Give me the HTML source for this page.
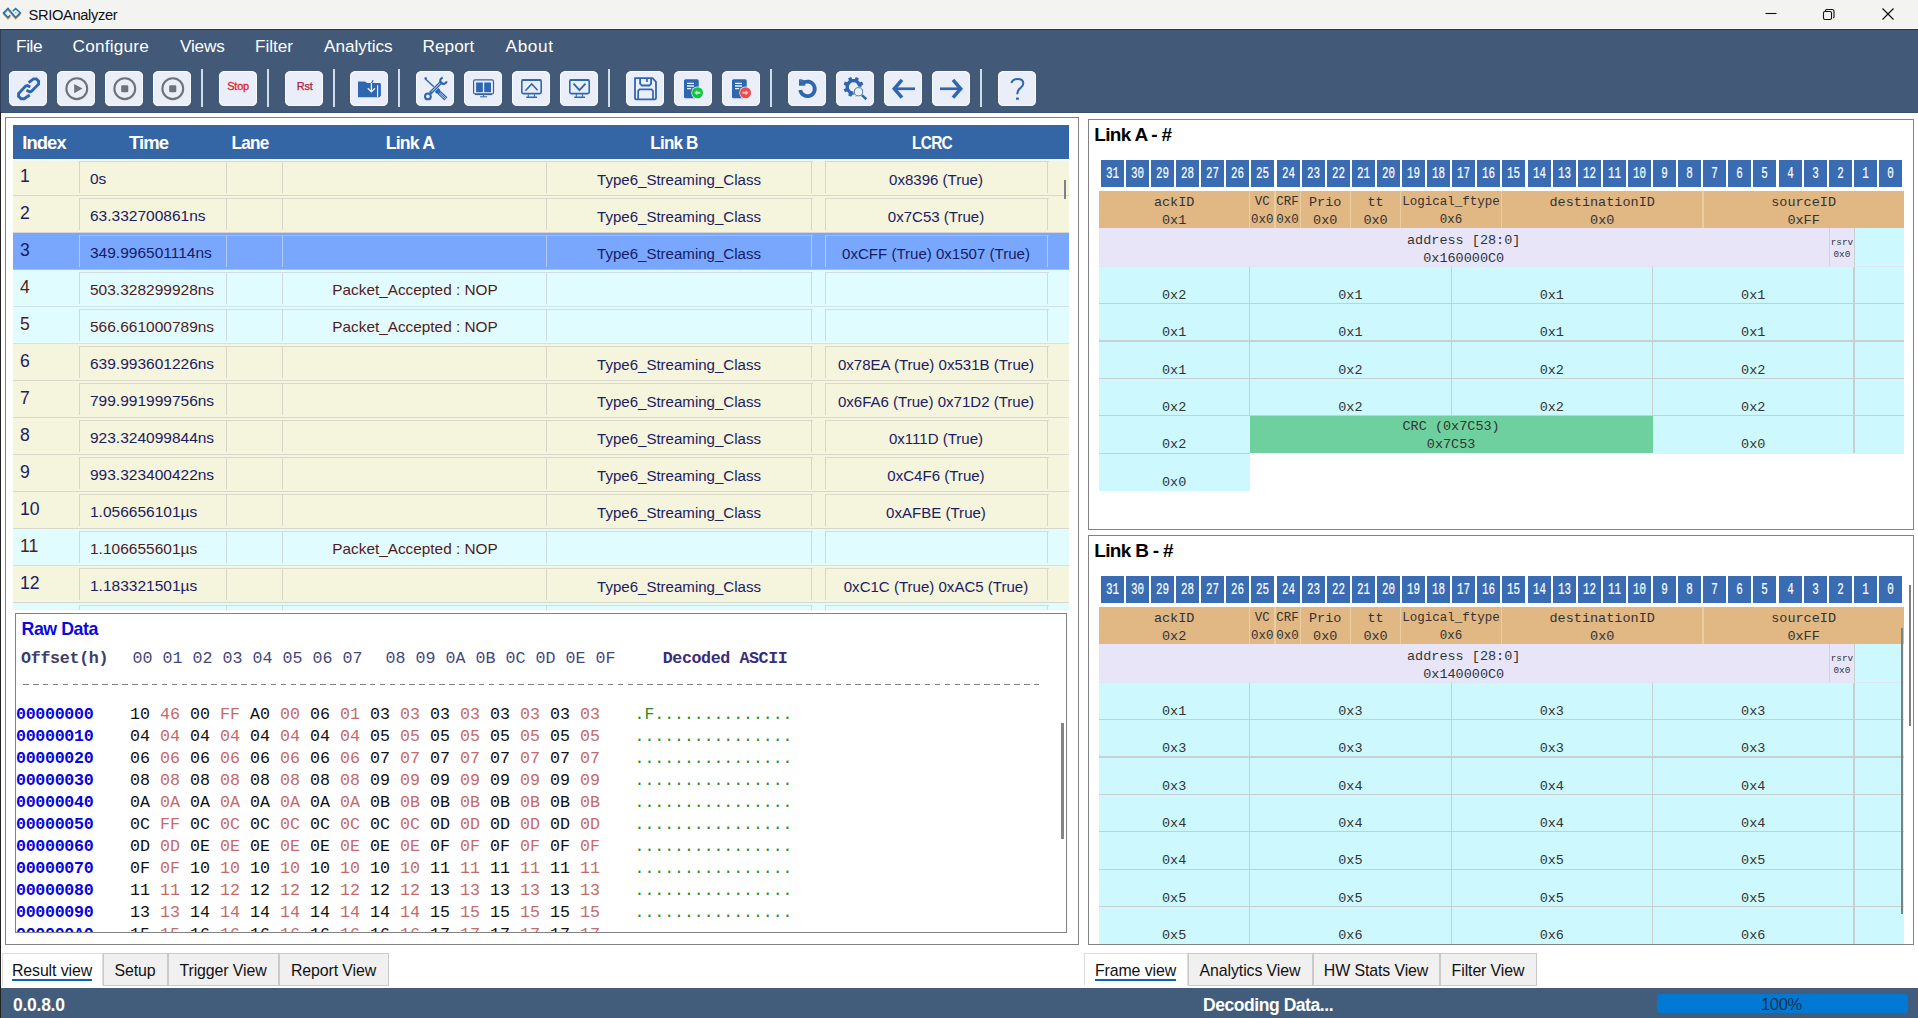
<!DOCTYPE html>
<html><head><meta charset="utf-8"><title>SRIOAnalyzer</title><style>
*{box-sizing:border-box;margin:0;padding:0}
html,body{width:1918px;height:1018px;overflow:hidden;background:#fff;font-family:"Liberation Sans",sans-serif;}
.abs{position:absolute}
#title{position:absolute;left:0;top:0;width:1918px;height:29px;background:#f3f3f1}
#tl1{position:absolute;left:0;top:28px;width:1918px;height:1px;background:#fbfbfb;z-index:5}
#tl2{position:absolute;left:0;top:29px;width:1918px;height:1px;background:#2d3046;z-index:5}
#title .t{position:absolute;left:28.6px;top:6.8px;font-size:14.7px;color:#111;letter-spacing:-0.36px;white-space:nowrap}
#band{position:absolute;left:0;top:29px;width:1918px;height:83.6px;background:#425978;box-shadow:inset 0 -1px 0 #3b506e}
#band .edge{position:absolute;left:0;top:0;width:1px;height:83px;background:#2f3f58}
.menu{position:absolute;top:7.2px;font-size:17.2px;color:#fff;white-space:nowrap;letter-spacing:-0.2px}
.tb{position:absolute;top:41.7px;width:38.2px;height:35.5px;border-radius:5.5px;background:#e9eef9;box-shadow:inset 0 0 0 1px #f7fafe}
.tb svg{position:absolute;left:0;top:0;width:38.2px;height:35.5px}
.sep{position:absolute;top:40px;width:2.1px;height:38px;background:#cfdcec}
.tbt{position:absolute;left:0;width:38.2px;text-align:center;top:9.6px;font-size:11px;letter-spacing:-0.2px}
</style></head><body>
<div id="tl1"></div><div id="tl2"></div>
<div id="title">
<svg class="abs" style="left:0;top:0" width="26" height="28" viewBox="0 0 26 28"><g transform="translate(11.95 13.45) scale(0.88 0.84) translate(-12 -13.35)"><path d="M10.2 16.9 L7.5 19.6 L2.6 14.2 L7.5 9 L16.2 19.6 L21.5 14.2" fill="none" stroke="#e9952c" stroke-width="1.6" stroke-linejoin="miter"/><path d="M10.1 15.5 L7.5 18.1 L2.4 12.7 L7.5 7.5 L16.2 18.1 L21.6 12.7 L16.2 7.5 L12.9 10.7" fill="none" stroke="#2278b4" stroke-width="1.9" stroke-linejoin="miter"/><path d="M7.5 10.3 L5.2 12.7 L7.5 15.1 M16.2 10.4 L18.7 12.7 L16.2 15" fill="none" stroke="#c9ecfa" stroke-width="0.9"/><circle cx="16.3" cy="12.6" r="0.9" fill="#e0a040"/></g></svg>
<div class="t">SRIOAnalyzer</div>
<svg class="abs" style="left:1760px;top:0" width="158" height="29" viewBox="0 0 158 29"><path d="M5.5 13.5 H16.5" stroke="#111" stroke-width="1.1" fill="none"/><rect x="63.5" y="11.5" width="8" height="8" rx="1.5" stroke="#111" stroke-width="1.1" fill="none"/><path d="M65.5 11 V10.5 Q65.5 9.5 66.5 9.5 H72 Q74 9.5 74 11.5 V17 Q74 17.8 73 17.8" stroke="#111" stroke-width="1.1" fill="none"/><path d="M122.5 8.5 L133.5 19.5 M133.5 8.5 L122.5 19.5" stroke="#111" stroke-width="1.2" fill="none"/></svg>
</div>
<div id="band"><div class="edge"></div>
<div class="menu" style="left:16px;letter-spacing:-0.37px">File</div>
<div class="menu" style="left:72.6px;letter-spacing:0.2px">Configure</div>
<div class="menu" style="left:180px;letter-spacing:-0.2px">Views</div>
<div class="menu" style="left:255px;letter-spacing:-0.03px">Filter</div>
<div class="menu" style="left:324px;letter-spacing:-0.01px">Analytics</div>
<div class="menu" style="left:422.6px;letter-spacing:0.02px">Report</div>
<div class="menu" style="left:505.6px;letter-spacing:0.6px">About</div>
<div class="tb" style="left:8.9px"><svg viewBox="0 0 38.2 35.5"><g fill="none" stroke="#2f66b0" stroke-width="2.9" stroke-linejoin="miter" stroke-miterlimit="2"><path d="M19.6 11.6 L24.5 7.9 H27.3 L29.6 10.2 V13.2 L22.5 20.3 L20.9 20.9 L17.4 19.3"/><path d="M20.7 24.0 L15.2 27.8 H12.2 L9.6 25.4 V22.5 L16.7 15.1 L18.4 14.5 L21.3 16.1"/></g></svg></div>
<div class="tb" style="left:56.8px"><svg viewBox="0 0 38.2 35.5"><circle cx="19.8" cy="17.7" r="10.4" fill="none" stroke="#6f7377" stroke-width="2.1"/><path d="M17.2 12.9 L25.5 17.6 L17.2 22.3 Z" fill="#6f7377"/></svg></div>
<div class="tb" style="left:104.8px"><svg viewBox="0 0 38.2 35.5"><circle cx="19.8" cy="17.7" r="10.4" fill="none" stroke="#6f7377" stroke-width="2.1"/><rect x="16.2" y="14.3" width="7.1" height="6.9" rx="1.3" fill="#6f7377"/></svg></div>
<div class="tb" style="left:152.8px"><svg viewBox="0 0 38.2 35.5"><circle cx="19.8" cy="17.7" r="10.4" fill="none" stroke="#6f7377" stroke-width="2.1"/><rect x="16.2" y="14.3" width="7.1" height="6.9" rx="1.3" fill="#6f7377"/></svg></div>
<div class="sep" style="left:201px"></div>
<div class="tb" style="left:219px"><div class="tbt" style="color:#e32222;-webkit-text-stroke:0.3px #e32222">Stop</div></div>
<div class="sep" style="left:267px"></div>
<div class="tb" style="left:285px"><div class="tbt" style="color:#b3203c;-webkit-text-stroke:0.25px #b3203c;text-indent:1px">Rst</div></div>
<div class="sep" style="left:333px"></div>
<div class="tb" style="left:350px"><svg viewBox="0 0 38.2 35.5"><path d="M8 10.5 H14.8 L17.2 12 H29.6 Q30.9 12 30.9 13.4 V24.8 L29.5 26.2 H8 Z" fill="#2f66b0"/><path d="M21.4 11 V20.4 M17.8 17.3 L21.4 20.8 L25 17.3" stroke="#e6f1fc" stroke-width="1.3" fill="none"/><path d="M23.1 9.2 L21.7 12" stroke="#2f66b0" stroke-width="1.3"/><path d="M27.6 14.2 V25.9" stroke="#e6f1fc" stroke-width="1.2"/></svg></div>
<div class="sep" style="left:398px"></div>
<div class="tb" style="left:416px"><svg viewBox="0 0 38.2 35.5"><g fill="none" stroke="#2f66b0"><path d="M9.8 8.2 L17.8 15.8" stroke-width="1.4"/><path d="M8.4 7.9 L10.9 6.9 M9.2 6.2 L10.2 8.9" stroke-width="1.3"/><path d="M20.6 18.9 L22.6 20.8" stroke-width="5.2"/><path d="M21.6 20 L29.9 27.9" stroke-width="4.4"/><path d="M23.9 21.3 L29.9 27 M22.9 22.3 L28.9 28" stroke="#e9eef9" stroke-width="0.7"/><path d="M14.2 22.2 L25.8 10.6" stroke-width="3.4"/><path d="M15.6 20.8 L24.6 11.8" stroke="#e9eef9" stroke-width="0.9"/><path d="M26.7 6.5 C23.4 8 23.6 11.2 25.6 12.2 C27.4 13.7 30 12.6 30.8 10.3" stroke-width="2.1"/><circle cx="11.9" cy="25.4" r="3.9" fill="#2f66b0" stroke="none"/><circle cx="11.9" cy="25.4" r="1.8" fill="#e9eef9" stroke="none"/></g></svg></div>
<div class="tb" style="left:464px"><svg viewBox="0 0 38.2 35.5"><rect x="9.6" y="8.8" width="19.9" height="14.2" rx="1.5" fill="none" stroke="#35609f" stroke-width="1.2"/><rect x="11.1" y="22.5" width="16.9" height="1.6" fill="#35609f"/><rect x="12.1" y="11.5" width="6.8" height="9.7" fill="#2f66b0"/><rect x="20.2" y="11.5" width="6.8" height="9.7" fill="#2f66b0"/><path d="M19.6 24 V25.8 M16 25.8 H23.1" stroke="#35609f" stroke-width="1"/></svg></div>
<div class="tb" style="left:512px"><svg viewBox="0 0 38.2 35.5"><rect x="9.8" y="9.1" width="19.4" height="13.5" rx="1.5" fill="none" stroke="#2f66b0" stroke-width="1.6"/><path d="M9.8 9 H29.2" stroke="#2f66b0" stroke-width="1.8"/><path d="M13.4 19.8 L19.75 12.9 L25.6 19.3" fill="none" stroke="#2f66b0" stroke-width="1.6"/><path d="M16.3 23.2 V25.8 M22.5 23.2 V25.8" stroke="#2f66b0" stroke-width="1.1"/><path d="M14.25 26.25 H25" stroke="#2f66b0" stroke-width="1.5"/></svg></div>
<div class="tb" style="left:560px"><svg viewBox="0 0 38.2 35.5"><rect x="9.8" y="9.1" width="19.4" height="13.5" rx="1.5" fill="none" stroke="#2f66b0" stroke-width="1.6"/><path d="M9.8 9 H29.2" stroke="#2f66b0" stroke-width="1.8"/><path d="M13.5 12.7 L19.5 19.2 L25.5 12.7" fill="none" stroke="#2f66b0" stroke-width="1.9"/><path d="M16.3 23.2 V25.8 M22.5 23.2 V25.8" stroke="#2f66b0" stroke-width="1.1"/><path d="M14.25 26.25 H25" stroke="#2f66b0" stroke-width="1.5"/></svg></div>
<div class="sep" style="left:608px"></div>
<div class="tb" style="left:626px"><svg viewBox="0 0 38.2 35.5"><path d="M9 7.2 H26.5 L30 10.8 V27 Q30 28.4 28.6 28.4 H10.4 Q9 28.4 9 27 Z" fill="none" stroke="#2f66b0" stroke-width="1.8" stroke-linejoin="round"/><path d="M14.1 7.2 V12.6 L15.9 14.5 H23.4 L25.1 12.6 V7.2" fill="none" stroke="#2f66b0" stroke-width="1.8"/><path d="M21 8 V11" stroke="#2f66b0" stroke-width="1.7"/><path d="M12.2 28.4 V19.8 L13.6 18.3 H25.6 L27 19.8 V28.4" fill="none" stroke="#2f66b0" stroke-width="1.7"/></svg></div>
<div class="tb" style="left:674px"><svg viewBox="0 0 38.2 35.5"><rect x="10" y="8.25" width="14.75" height="19" rx="1.6" fill="#2f66b0"/><path d="M13 12.3 H20 M13 15 H20 M13 17.7 H17.2" stroke="#e6f4fd" stroke-width="1.3"/><circle cx="23.5" cy="21.75" r="6.2" fill="#e9eef9"/><circle cx="23.5" cy="21.75" r="5.5" fill="#12c33e"/><path d="M20.4 21.75 L23.3 19.2 V20.7 H26.5 V22.8 H23.3 V24.3 Z" fill="#b5efc6"/></svg></div>
<div class="tb" style="left:722px"><svg viewBox="0 0 38.2 35.5"><rect x="10" y="8.25" width="14.75" height="19" rx="1.6" fill="#2f66b0"/><path d="M13 12.3 H20 M13 15 H20 M13 17.7 H17.2" stroke="#e6f4fd" stroke-width="1.3"/><circle cx="23.5" cy="21.75" r="6.2" fill="#e9eef9"/><circle cx="23.5" cy="21.75" r="5.5" fill="#ef4a4a"/><path d="M26.6 21.75 L23.7 19.2 V20.7 H20.5 V22.8 H23.7 V24.3 Z" fill="#fac4c4"/></svg></div>
<div class="sep" style="left:770px"></div>
<div class="tb" style="left:788px"><svg viewBox="0 0 38.2 35.5"><path d="M14.6 12.4 A7.3 7.3 0 1 1 12.25 19.0" fill="none" stroke="#2f66b0" stroke-width="3.8"/><path d="M11 8.25 L17.4 14.75 H11 Z" fill="#2f66b0"/><path d="M11 8.25 H13.5 L17 10 L17.4 14.75" fill="#2f66b0"/></svg></div>
<div class="tb" style="left:836px"><svg viewBox="0 0 38.2 35.5"><path d="M25.40 17.15 L27.32 18.26 L26.11 21.18 L23.97 20.60 L22.20 22.37 L22.78 24.51 L19.86 25.72 L18.75 23.80 L16.25 23.80 L15.14 25.72 L12.22 24.51 L12.80 22.37 L11.03 20.60 L8.89 21.18 L7.68 18.26 L9.60 17.15 L9.60 14.65 L7.68 13.54 L8.89 10.62 L11.03 11.20 L12.80 9.43 L12.22 7.29 L15.14 6.08 L16.25 8.00 L18.75 8.00 L19.86 6.08 L22.78 7.29 L22.20 9.43 L23.97 11.20 L26.11 10.62 L27.32 13.54 L25.40 14.65 Z" fill="#2f66b0"/><circle cx="17.5" cy="15.9" r="4.6" fill="#e9eef9"/><circle cx="22.5" cy="20.75" r="5.2" fill="#e9eef9"/><path d="M24.5 22.8 L31 28.8" stroke="#e9eef9" stroke-width="4"/><circle cx="22.5" cy="20.75" r="4.1" fill="#eef3fb" stroke="#41679d" stroke-width="0.9"/><path d="M25.9 24.2 L30.4 28.3" stroke="#2f66b0" stroke-width="2.5"/></svg></div>
<div class="tb" style="left:884px"><svg viewBox="0 0 38.2 35.5"><path d="M11 17.75 H31" fill="none" stroke="#2f66b0" stroke-width="2.7"/><path d="M18 8.9 L10.3 17.75 L18 26.6" fill="none" stroke="#2f66b0" stroke-width="3.5" stroke-miterlimit="6"/></svg></div>
<div class="tb" style="left:932px"><svg viewBox="0 0 38.2 35.5"><path d="M28 17.75 H8" fill="none" stroke="#2f66b0" stroke-width="2.7"/><path d="M21 8.9 L28.7 17.75 L21 26.6" fill="none" stroke="#2f66b0" stroke-width="3.5" stroke-miterlimit="6"/></svg></div>
<div class="sep" style="left:980px"></div>
<div class="tb" style="left:998px"><svg viewBox="0 0 38.2 35.5"><path d="M13.4 12 Q14.6 7.9 19.5 7.9 Q25.3 7.9 25.3 12.3 Q25.3 14.9 22.6 16.9 Q19.2 19.3 19.2 23.3" fill="none" stroke="#2f66b0" stroke-width="2"/><rect x="18" y="26.4" width="2.9" height="2.4" rx="0.5" fill="#2f66b0"/></svg></div>
</div>
<style>
#winedge{position:absolute;left:0;top:112px;width:1px;height:906px;background:#222;z-index:9}
#lp{position:absolute;left:5px;top:117px;width:1074px;height:828px;border:1px solid #828282;background:#fff}
#tbl{position:absolute;left:13px;top:125px;width:1056px;height:485px;overflow:hidden;background:#fff}
#th{position:absolute;left:0;top:0;width:1056px;height:33.5px;background:#3465a4}
#th div{position:absolute;top:6.5px;color:#fff;font-weight:bold;font-size:18.5px;letter-spacing:-0.9px;white-space:nowrap;transform:translateX(-50%)}
.row{position:absolute;left:0;width:1056px;height:37px;font-size:15.5px;white-space:nowrap}
.row.c{background:#f5f4dc;color:#1b2063}
.row.a{background:#e0fcff;color:#551a1a}
.row.s{background:#7aa7fe;color:#141c66}
.row .hl{position:absolute;left:0;top:36.5px;width:1056px;height:1px;background:#d9d7cc}
.row.a .hl{background:#cfe3ea}
.row.s .hl{background:#9fc0fb}
.row .ct{position:absolute;top:2.4px;height:1px;background:#dad8ca}
.row .cv{position:absolute;top:2.4px;height:32px;width:1.2px;background:#d7d5c8}
.row.a .ct{background:#d0dde1}.row.a .cv{background:#cddadf}
.row.s .ct{background:#9dbcf8}.row.s .cv{background:#b4cbf6}
.row .ix{position:absolute;left:7px;top:7.6px;font-size:17.6px}
.row .tm{position:absolute;left:77px;top:11.6px}
.row .la{position:absolute;left:270px;width:264px;text-align:center;top:11.8px;font-size:15.35px}
.row .lb{position:absolute;left:534px;width:264px;text-align:center;top:12px;font-size:15.05px}
.row .lc{position:absolute;left:812px;width:222px;text-align:center;top:12px;font-size:15.05px}
#tsb{position:absolute;left:1063.8px;top:179.5px;width:2.6px;height:19px;background:#808080}
#raw{position:absolute;left:15px;top:613px;width:1052px;height:320px;border:1px solid #828282;background:#fff;overflow:hidden}
#raw .rt{position:absolute;left:5.5px;top:4.5px;font-weight:bold;color:#0a0adf;font-size:17.8px;letter-spacing:-0.45px}
.mono{font-family:"Liberation Mono",monospace;font-size:16.67px;white-space:pre;position:absolute;line-height:22px}
#rsb{position:absolute;left:1061px;top:723px;width:3px;height:116px;background:#858585}
</style>
<div id="winedge"></div>
<div id="lp"></div>
<div id="tbl"><div id="th">
<div style="left:31px;transform:translateX(-50%) scaleX(0.99)">Index</div>
<div style="left:135.5px;transform:translateX(-50%) scaleX(1)">Time</div>
<div style="left:236.5px;transform:translateX(-50%) scaleX(0.93)">Lane</div>
<div style="left:396.5px;transform:translateX(-50%) scaleX(0.96)">Link A</div>
<div style="left:661px;transform:translateX(-50%) scaleX(0.925)">Link B</div>
<div style="left:918.5px;transform:translateX(-50%) scaleX(0.835)">LCRC</div>
</div><div style="position:absolute;left:0;top:33.5px;width:1056px;height:2px;background:#f1f7f1;z-index:3"></div>
<div class="row c" style="top:33.5px">
<div class="ct" style="left:66px;width:733.5px"></div><div class="ct" style="left:812px;width:223.5px"></div>
<div class="cv" style="left:65.8px"></div>
<div class="cv" style="left:213.2px"></div>
<div class="cv" style="left:268.7px"></div>
<div class="cv" style="left:533.2px"></div>
<div class="cv" style="left:797.8px"></div>
<div class="cv" style="left:811.7px"></div>
<div class="cv" style="left:1033.8px"></div>
<div class="hl"></div>
<div class="ix">1</div><div class="tm">0s</div>
<div class="lb">Type6_Streaming_Class</div>
<div class="lc">0x8396 (True)</div>
</div>
<div class="row c" style="top:70.5px">
<div class="ct" style="left:66px;width:733.5px"></div><div class="ct" style="left:812px;width:223.5px"></div>
<div class="cv" style="left:65.8px"></div>
<div class="cv" style="left:213.2px"></div>
<div class="cv" style="left:268.7px"></div>
<div class="cv" style="left:533.2px"></div>
<div class="cv" style="left:797.8px"></div>
<div class="cv" style="left:811.7px"></div>
<div class="cv" style="left:1033.8px"></div>
<div class="hl"></div>
<div class="ix">2</div><div class="tm">63.332700861ns</div>
<div class="lb">Type6_Streaming_Class</div>
<div class="lc">0x7C53 (True)</div>
</div>
<div class="row s" style="top:107.5px">
<div class="ct" style="left:66px;width:733.5px"></div><div class="ct" style="left:812px;width:223.5px"></div>
<div class="cv" style="left:65.8px"></div>
<div class="cv" style="left:213.2px"></div>
<div class="cv" style="left:268.7px"></div>
<div class="cv" style="left:533.2px"></div>
<div class="cv" style="left:797.8px"></div>
<div class="cv" style="left:811.7px"></div>
<div class="cv" style="left:1033.8px"></div>
<div class="hl"></div>
<div class="ix">3</div><div class="tm">349.996501114ns</div>
<div class="lb">Type6_Streaming_Class</div>
<div class="lc">0xCFF (True) 0x1507 (True)</div>
</div>
<div class="row a" style="top:144.5px">
<div class="ct" style="left:66px;width:733.5px"></div><div class="ct" style="left:812px;width:223.5px"></div>
<div class="cv" style="left:65.8px"></div>
<div class="cv" style="left:213.2px"></div>
<div class="cv" style="left:268.7px"></div>
<div class="cv" style="left:533.2px"></div>
<div class="cv" style="left:797.8px"></div>
<div class="cv" style="left:811.7px"></div>
<div class="cv" style="left:1033.8px"></div>
<div class="hl"></div>
<div class="ix">4</div><div class="tm">503.328299928ns</div>
<div class="la">Packet_Accepted : NOP</div>
</div>
<div class="row a" style="top:181.5px">
<div class="ct" style="left:66px;width:733.5px"></div><div class="ct" style="left:812px;width:223.5px"></div>
<div class="cv" style="left:65.8px"></div>
<div class="cv" style="left:213.2px"></div>
<div class="cv" style="left:268.7px"></div>
<div class="cv" style="left:533.2px"></div>
<div class="cv" style="left:797.8px"></div>
<div class="cv" style="left:811.7px"></div>
<div class="cv" style="left:1033.8px"></div>
<div class="hl"></div>
<div class="ix">5</div><div class="tm">566.661000789ns</div>
<div class="la">Packet_Accepted : NOP</div>
</div>
<div class="row c" style="top:218.5px">
<div class="ct" style="left:66px;width:733.5px"></div><div class="ct" style="left:812px;width:223.5px"></div>
<div class="cv" style="left:65.8px"></div>
<div class="cv" style="left:213.2px"></div>
<div class="cv" style="left:268.7px"></div>
<div class="cv" style="left:533.2px"></div>
<div class="cv" style="left:797.8px"></div>
<div class="cv" style="left:811.7px"></div>
<div class="cv" style="left:1033.8px"></div>
<div class="hl"></div>
<div class="ix">6</div><div class="tm">639.993601226ns</div>
<div class="lb">Type6_Streaming_Class</div>
<div class="lc">0x78EA (True) 0x531B (True)</div>
</div>
<div class="row c" style="top:255.5px">
<div class="ct" style="left:66px;width:733.5px"></div><div class="ct" style="left:812px;width:223.5px"></div>
<div class="cv" style="left:65.8px"></div>
<div class="cv" style="left:213.2px"></div>
<div class="cv" style="left:268.7px"></div>
<div class="cv" style="left:533.2px"></div>
<div class="cv" style="left:797.8px"></div>
<div class="cv" style="left:811.7px"></div>
<div class="cv" style="left:1033.8px"></div>
<div class="hl"></div>
<div class="ix">7</div><div class="tm">799.991999756ns</div>
<div class="lb">Type6_Streaming_Class</div>
<div class="lc">0x6FA6 (True) 0x71D2 (True)</div>
</div>
<div class="row c" style="top:292.5px">
<div class="ct" style="left:66px;width:733.5px"></div><div class="ct" style="left:812px;width:223.5px"></div>
<div class="cv" style="left:65.8px"></div>
<div class="cv" style="left:213.2px"></div>
<div class="cv" style="left:268.7px"></div>
<div class="cv" style="left:533.2px"></div>
<div class="cv" style="left:797.8px"></div>
<div class="cv" style="left:811.7px"></div>
<div class="cv" style="left:1033.8px"></div>
<div class="hl"></div>
<div class="ix">8</div><div class="tm">923.324099844ns</div>
<div class="lb">Type6_Streaming_Class</div>
<div class="lc">0x111D (True)</div>
</div>
<div class="row c" style="top:329.5px">
<div class="ct" style="left:66px;width:733.5px"></div><div class="ct" style="left:812px;width:223.5px"></div>
<div class="cv" style="left:65.8px"></div>
<div class="cv" style="left:213.2px"></div>
<div class="cv" style="left:268.7px"></div>
<div class="cv" style="left:533.2px"></div>
<div class="cv" style="left:797.8px"></div>
<div class="cv" style="left:811.7px"></div>
<div class="cv" style="left:1033.8px"></div>
<div class="hl"></div>
<div class="ix">9</div><div class="tm">993.323400422ns</div>
<div class="lb">Type6_Streaming_Class</div>
<div class="lc">0xC4F6 (True)</div>
</div>
<div class="row c" style="top:366.5px">
<div class="ct" style="left:66px;width:733.5px"></div><div class="ct" style="left:812px;width:223.5px"></div>
<div class="cv" style="left:65.8px"></div>
<div class="cv" style="left:213.2px"></div>
<div class="cv" style="left:268.7px"></div>
<div class="cv" style="left:533.2px"></div>
<div class="cv" style="left:797.8px"></div>
<div class="cv" style="left:811.7px"></div>
<div class="cv" style="left:1033.8px"></div>
<div class="hl"></div>
<div class="ix">10</div><div class="tm">1.056656101µs</div>
<div class="lb">Type6_Streaming_Class</div>
<div class="lc">0xAFBE (True)</div>
</div>
<div class="row a" style="top:403.5px">
<div class="ct" style="left:66px;width:733.5px"></div><div class="ct" style="left:812px;width:223.5px"></div>
<div class="cv" style="left:65.8px"></div>
<div class="cv" style="left:213.2px"></div>
<div class="cv" style="left:268.7px"></div>
<div class="cv" style="left:533.2px"></div>
<div class="cv" style="left:797.8px"></div>
<div class="cv" style="left:811.7px"></div>
<div class="cv" style="left:1033.8px"></div>
<div class="hl"></div>
<div class="ix">11</div><div class="tm">1.106655601µs</div>
<div class="la">Packet_Accepted : NOP</div>
</div>
<div class="row c" style="top:440.5px">
<div class="ct" style="left:66px;width:733.5px"></div><div class="ct" style="left:812px;width:223.5px"></div>
<div class="cv" style="left:65.8px"></div>
<div class="cv" style="left:213.2px"></div>
<div class="cv" style="left:268.7px"></div>
<div class="cv" style="left:533.2px"></div>
<div class="cv" style="left:797.8px"></div>
<div class="cv" style="left:811.7px"></div>
<div class="cv" style="left:1033.8px"></div>
<div class="hl"></div>
<div class="ix">12</div><div class="tm">1.183321501µs</div>
<div class="lb">Type6_Streaming_Class</div>
<div class="lc">0xC1C (True) 0xAC5 (True)</div>
</div>
<div class="row a" style="top:477.5px">
<div class="ct" style="left:66px;width:733.5px"></div><div class="ct" style="left:812px;width:223.5px"></div>
<div class="cv" style="left:65.8px"></div>
<div class="cv" style="left:213.2px"></div>
<div class="cv" style="left:268.7px"></div>
<div class="cv" style="left:533.2px"></div>
<div class="cv" style="left:797.8px"></div>
<div class="cv" style="left:811.7px"></div>
<div class="cv" style="left:1033.8px"></div>
<div class="hl"></div>
</div>
</div>
<div id="tsb"></div>
<div id="raw"><div class="rt">Raw Data</div>
<div class="mono" style="left:5px;top:34px;font-weight:bold;color:#3d3d6b;letter-spacing:-0.3px">Offset(h)</div>
<div class="mono" style="left:116.6px;top:34px;color:#46467c">00 01 02 03 04 05 06 07</div>
<div class="mono" style="left:369.5px;top:34px;color:#46467c">08 09 0A 0B 0C 0D 0E 0F</div>
<div class="mono" style="left:646.8px;top:34px;font-weight:bold;color:#3a2c78;letter-spacing:-0.42px">Decoded ASCII</div>
<div style="position:absolute;left:7.1px;top:69.8px;width:1016.6px;height:1.3px;background:repeating-linear-gradient(90deg,#7f7f7f 0,#7f7f7f 5.6px,transparent 5.6px,transparent 9.91px)"></div>
<div class="mono" style="left:0px;top:89.5px;font-weight:bold;color:#0505e0;letter-spacing:-0.33px">00000000</div>
<div class="mono" style="left:114px;top:89.5px"><span style="color:#111">10</span> <span style="color:#c46a6a">46</span> <span style="color:#111">00</span> <span style="color:#c46a6a">FF</span> <span style="color:#111">A0</span> <span style="color:#c46a6a">00</span> <span style="color:#111">06</span> <span style="color:#c46a6a">01</span> <span style="color:#111">03</span> <span style="color:#c46a6a">03</span> <span style="color:#111">03</span> <span style="color:#c46a6a">03</span> <span style="color:#111">03</span> <span style="color:#c46a6a">03</span> <span style="color:#111">03</span> <span style="color:#c46a6a">03</span> </div>
<div class="mono" style="left:618.6px;top:89.5px;color:#2b8a1e;font-size:16.45px">.F..............</div>
<div class="mono" style="left:0px;top:111.5px;font-weight:bold;color:#0505e0;letter-spacing:-0.33px">00000010</div>
<div class="mono" style="left:114px;top:111.5px"><span style="color:#111">04</span> <span style="color:#c46a6a">04</span> <span style="color:#111">04</span> <span style="color:#c46a6a">04</span> <span style="color:#111">04</span> <span style="color:#c46a6a">04</span> <span style="color:#111">04</span> <span style="color:#c46a6a">04</span> <span style="color:#111">05</span> <span style="color:#c46a6a">05</span> <span style="color:#111">05</span> <span style="color:#c46a6a">05</span> <span style="color:#111">05</span> <span style="color:#c46a6a">05</span> <span style="color:#111">05</span> <span style="color:#c46a6a">05</span> </div>
<div class="mono" style="left:618.6px;top:111.5px;color:#2b8a1e;font-size:16.45px">................</div>
<div class="mono" style="left:0px;top:133.5px;font-weight:bold;color:#0505e0;letter-spacing:-0.33px">00000020</div>
<div class="mono" style="left:114px;top:133.5px"><span style="color:#111">06</span> <span style="color:#c46a6a">06</span> <span style="color:#111">06</span> <span style="color:#c46a6a">06</span> <span style="color:#111">06</span> <span style="color:#c46a6a">06</span> <span style="color:#111">06</span> <span style="color:#c46a6a">06</span> <span style="color:#111">07</span> <span style="color:#c46a6a">07</span> <span style="color:#111">07</span> <span style="color:#c46a6a">07</span> <span style="color:#111">07</span> <span style="color:#c46a6a">07</span> <span style="color:#111">07</span> <span style="color:#c46a6a">07</span> </div>
<div class="mono" style="left:618.6px;top:133.5px;color:#2b8a1e;font-size:16.45px">................</div>
<div class="mono" style="left:0px;top:155.5px;font-weight:bold;color:#0505e0;letter-spacing:-0.33px">00000030</div>
<div class="mono" style="left:114px;top:155.5px"><span style="color:#111">08</span> <span style="color:#c46a6a">08</span> <span style="color:#111">08</span> <span style="color:#c46a6a">08</span> <span style="color:#111">08</span> <span style="color:#c46a6a">08</span> <span style="color:#111">08</span> <span style="color:#c46a6a">08</span> <span style="color:#111">09</span> <span style="color:#c46a6a">09</span> <span style="color:#111">09</span> <span style="color:#c46a6a">09</span> <span style="color:#111">09</span> <span style="color:#c46a6a">09</span> <span style="color:#111">09</span> <span style="color:#c46a6a">09</span> </div>
<div class="mono" style="left:618.6px;top:155.5px;color:#2b8a1e;font-size:16.45px">................</div>
<div class="mono" style="left:0px;top:177.5px;font-weight:bold;color:#0505e0;letter-spacing:-0.33px">00000040</div>
<div class="mono" style="left:114px;top:177.5px"><span style="color:#111">0A</span> <span style="color:#c46a6a">0A</span> <span style="color:#111">0A</span> <span style="color:#c46a6a">0A</span> <span style="color:#111">0A</span> <span style="color:#c46a6a">0A</span> <span style="color:#111">0A</span> <span style="color:#c46a6a">0A</span> <span style="color:#111">0B</span> <span style="color:#c46a6a">0B</span> <span style="color:#111">0B</span> <span style="color:#c46a6a">0B</span> <span style="color:#111">0B</span> <span style="color:#c46a6a">0B</span> <span style="color:#111">0B</span> <span style="color:#c46a6a">0B</span> </div>
<div class="mono" style="left:618.6px;top:177.5px;color:#2b8a1e;font-size:16.45px">................</div>
<div class="mono" style="left:0px;top:199.5px;font-weight:bold;color:#0505e0;letter-spacing:-0.33px">00000050</div>
<div class="mono" style="left:114px;top:199.5px"><span style="color:#111">0C</span> <span style="color:#c46a6a">FF</span> <span style="color:#111">0C</span> <span style="color:#c46a6a">0C</span> <span style="color:#111">0C</span> <span style="color:#c46a6a">0C</span> <span style="color:#111">0C</span> <span style="color:#c46a6a">0C</span> <span style="color:#111">0C</span> <span style="color:#c46a6a">0C</span> <span style="color:#111">0D</span> <span style="color:#c46a6a">0D</span> <span style="color:#111">0D</span> <span style="color:#c46a6a">0D</span> <span style="color:#111">0D</span> <span style="color:#c46a6a">0D</span> </div>
<div class="mono" style="left:618.6px;top:199.5px;color:#2b8a1e;font-size:16.45px">................</div>
<div class="mono" style="left:0px;top:221.5px;font-weight:bold;color:#0505e0;letter-spacing:-0.33px">00000060</div>
<div class="mono" style="left:114px;top:221.5px"><span style="color:#111">0D</span> <span style="color:#c46a6a">0D</span> <span style="color:#111">0E</span> <span style="color:#c46a6a">0E</span> <span style="color:#111">0E</span> <span style="color:#c46a6a">0E</span> <span style="color:#111">0E</span> <span style="color:#c46a6a">0E</span> <span style="color:#111">0E</span> <span style="color:#c46a6a">0E</span> <span style="color:#111">0F</span> <span style="color:#c46a6a">0F</span> <span style="color:#111">0F</span> <span style="color:#c46a6a">0F</span> <span style="color:#111">0F</span> <span style="color:#c46a6a">0F</span> </div>
<div class="mono" style="left:618.6px;top:221.5px;color:#2b8a1e;font-size:16.45px">................</div>
<div class="mono" style="left:0px;top:243.5px;font-weight:bold;color:#0505e0;letter-spacing:-0.33px">00000070</div>
<div class="mono" style="left:114px;top:243.5px"><span style="color:#111">0F</span> <span style="color:#c46a6a">0F</span> <span style="color:#111">10</span> <span style="color:#c46a6a">10</span> <span style="color:#111">10</span> <span style="color:#c46a6a">10</span> <span style="color:#111">10</span> <span style="color:#c46a6a">10</span> <span style="color:#111">10</span> <span style="color:#c46a6a">10</span> <span style="color:#111">11</span> <span style="color:#c46a6a">11</span> <span style="color:#111">11</span> <span style="color:#c46a6a">11</span> <span style="color:#111">11</span> <span style="color:#c46a6a">11</span> </div>
<div class="mono" style="left:618.6px;top:243.5px;color:#2b8a1e;font-size:16.45px">................</div>
<div class="mono" style="left:0px;top:265.5px;font-weight:bold;color:#0505e0;letter-spacing:-0.33px">00000080</div>
<div class="mono" style="left:114px;top:265.5px"><span style="color:#111">11</span> <span style="color:#c46a6a">11</span> <span style="color:#111">12</span> <span style="color:#c46a6a">12</span> <span style="color:#111">12</span> <span style="color:#c46a6a">12</span> <span style="color:#111">12</span> <span style="color:#c46a6a">12</span> <span style="color:#111">12</span> <span style="color:#c46a6a">12</span> <span style="color:#111">13</span> <span style="color:#c46a6a">13</span> <span style="color:#111">13</span> <span style="color:#c46a6a">13</span> <span style="color:#111">13</span> <span style="color:#c46a6a">13</span> </div>
<div class="mono" style="left:618.6px;top:265.5px;color:#2b8a1e;font-size:16.45px">................</div>
<div class="mono" style="left:0px;top:287.5px;font-weight:bold;color:#0505e0;letter-spacing:-0.33px">00000090</div>
<div class="mono" style="left:114px;top:287.5px"><span style="color:#111">13</span> <span style="color:#c46a6a">13</span> <span style="color:#111">14</span> <span style="color:#c46a6a">14</span> <span style="color:#111">14</span> <span style="color:#c46a6a">14</span> <span style="color:#111">14</span> <span style="color:#c46a6a">14</span> <span style="color:#111">14</span> <span style="color:#c46a6a">14</span> <span style="color:#111">15</span> <span style="color:#c46a6a">15</span> <span style="color:#111">15</span> <span style="color:#c46a6a">15</span> <span style="color:#111">15</span> <span style="color:#c46a6a">15</span> </div>
<div class="mono" style="left:618.6px;top:287.5px;color:#2b8a1e;font-size:16.45px">................</div>
<div class="mono" style="left:0px;top:309.5px;font-weight:bold;color:#0505e0;letter-spacing:-0.33px">000000A0</div>
<div class="mono" style="left:114px;top:309.5px"><span style="color:#111">15</span> <span style="color:#c46a6a">15</span> <span style="color:#111">16</span> <span style="color:#c46a6a">16</span> <span style="color:#111">16</span> <span style="color:#c46a6a">16</span> <span style="color:#111">16</span> <span style="color:#c46a6a">16</span> <span style="color:#111">16</span> <span style="color:#c46a6a">16</span> <span style="color:#111">17</span> <span style="color:#c46a6a">17</span> <span style="color:#111">17</span> <span style="color:#c46a6a">17</span> <span style="color:#111">17</span> <span style="color:#c46a6a">17</span> </div>
<div class="mono" style="left:618.6px;top:309.5px;color:#2b8a1e;font-size:16.45px">................</div>
</div>
<div id="rsb"></div>
<style>
.fp{position:absolute;left:1088px;width:826px;border:1px solid #828282;background:#fff;overflow:hidden}
.fp .ti{position:absolute;left:5.3px;top:3.9px;font-weight:bold;font-size:19px;letter-spacing:-0.7px;color:#000;white-space:nowrap}
.bit{position:absolute;top:39.7px;width:23px;height:27px;background:#3a6cb4;color:#fff;overflow:hidden}
.bit span{position:absolute;left:-20px;width:63px;text-align:center;top:4.3px;font-family:"Liberation Mono",monospace;font-size:16.9px;transform:scaleX(0.645);-webkit-text-stroke:0.2px #fff;white-space:nowrap}
.fc{position:absolute;font-family:"Liberation Mono",monospace;font-size:13.5px;line-height:17.5px;text-align:center;color:#333;white-space:pre;overflow:hidden}
.fc.o{background:#e1b784}
.fc.l{background:#e9e5f8}
.fc.y{background:#cdf8fd}
.fc.g{background:#6ecf9f}
.gl{position:absolute;background:#c7cfd3}
</style>
<div class="fp" style="top:119px;height:411px"><div class="ti">Link A - #</div>
<div class="bit" style="left:11.80px"><span>31</span></div>
<div class="bit" style="left:36.90px"><span>30</span></div>
<div class="bit" style="left:62.00px"><span>29</span></div>
<div class="bit" style="left:87.10px"><span>28</span></div>
<div class="bit" style="left:112.20px"><span>27</span></div>
<div class="bit" style="left:137.30px"><span>26</span></div>
<div class="bit" style="left:162.40px"><span>25</span></div>
<div class="bit" style="left:187.50px"><span>24</span></div>
<div class="bit" style="left:212.60px"><span>23</span></div>
<div class="bit" style="left:237.70px"><span>22</span></div>
<div class="bit" style="left:262.80px"><span>21</span></div>
<div class="bit" style="left:287.90px"><span>20</span></div>
<div class="bit" style="left:313.00px"><span>19</span></div>
<div class="bit" style="left:338.10px"><span>18</span></div>
<div class="bit" style="left:363.20px"><span>17</span></div>
<div class="bit" style="left:388.30px"><span>16</span></div>
<div class="bit" style="left:413.40px"><span>15</span></div>
<div class="bit" style="left:438.50px"><span>14</span></div>
<div class="bit" style="left:463.60px"><span>13</span></div>
<div class="bit" style="left:488.70px"><span>12</span></div>
<div class="bit" style="left:513.80px"><span>11</span></div>
<div class="bit" style="left:538.90px"><span>10</span></div>
<div class="bit" style="left:564.00px"><span>9</span></div>
<div class="bit" style="left:589.10px"><span>8</span></div>
<div class="bit" style="left:614.20px"><span>7</span></div>
<div class="bit" style="left:639.30px"><span>6</span></div>
<div class="bit" style="left:664.40px"><span>5</span></div>
<div class="bit" style="left:689.50px"><span>4</span></div>
<div class="bit" style="left:714.60px"><span>3</span></div>
<div class="bit" style="left:739.70px"><span>2</span></div>
<div class="bit" style="left:764.80px"><span>1</span></div>
<div class="bit" style="left:789.90px"><span>0</span></div>
<div class="fc o" style="left:9.60px;top:71.3px;width:151.08px;height:36.7px;padding-top:3px">ackID
0x1</div>
<div class="fc o" style="left:160.68px;top:71.3px;width:25.18px;height:36.7px;padding-top:3px;font-size:12.5px">VC
0x0</div>
<div class="fc o" style="left:185.86px;top:71.3px;width:25.18px;height:36.7px;padding-top:3px;font-size:12.5px">CRF
0x0</div>
<div class="fc o" style="left:211.04px;top:71.3px;width:50.36px;height:36.7px;padding-top:3px">Prio
0x0</div>
<div class="fc o" style="left:261.40px;top:71.3px;width:50.36px;height:36.7px;padding-top:3px">tt
0x0</div>
<div class="fc o" style="left:311.76px;top:71.3px;width:100.72px;height:36.7px;padding-top:3px;font-size:12.5px">Logical_ftype
0x6</div>
<div class="fc o" style="left:412.48px;top:71.3px;width:201.44px;height:36.7px;padding-top:3px">destinationID
0x0</div>
<div class="fc o" style="left:613.92px;top:71.3px;width:201.44px;height:36.7px;padding-top:3px">sourceID
0xFF</div>
<div class="gl" style="left:160.18px;top:71.3px;width:1.2px;height:36.7px;background:#e9cda6"></div>
<div class="gl" style="left:185.36px;top:71.3px;width:1.2px;height:36.7px;background:#e9cda6"></div>
<div class="gl" style="left:210.54px;top:71.3px;width:1.2px;height:36.7px;background:#e9cda6"></div>
<div class="gl" style="left:260.90px;top:71.3px;width:1.2px;height:36.7px;background:#e9cda6"></div>
<div class="gl" style="left:311.26px;top:71.3px;width:1.2px;height:36.7px;background:#e9cda6"></div>
<div class="gl" style="left:411.98px;top:71.3px;width:1.2px;height:36.7px;background:#e9cda6"></div>
<div class="gl" style="left:613.42px;top:71.3px;width:1.2px;height:36.7px;background:#e9cda6"></div>
<div class="fc l" style="left:9.60px;top:108.0px;width:730.22px;height:38.25px;padding-top:4px">address [28:0]
0x160000C0</div>
<div class="fc l" style="left:739.82px;top:108.0px;width:25.18px;height:38.25px;font-size:9.4px;line-height:12.4px;padding-top:8.8px;border-left:1px solid #d2cfe0">rsrv
0x0</div>
<div class="fc y" style="left:765.00px;top:108.0px;width:50.36px;height:38.25px;border-left:1px solid #c7cfd3"></div>
<div class="fc y" style="left:9.60px;top:146.25px;width:151.08px;height:37.90px;padding-top:20.6px">0x2</div>
<div class="fc y" style="left:160.68px;top:146.25px;width:201.44px;height:37.90px;padding-top:20.6px">0x1</div>
<div class="fc y" style="left:362.12px;top:146.25px;width:201.44px;height:37.90px;padding-top:20.6px">0x1</div>
<div class="fc y" style="left:563.56px;top:146.25px;width:201.44px;height:37.90px;padding-top:20.6px">0x1</div>
<div class="fc y" style="left:765.00px;top:146.25px;width:50.36px;height:37.90px;padding-top:20.6px"></div>
<div class="gl" style="left:160.08px;top:146.25px;width:1.2px;height:37.40px"></div>
<div class="gl" style="left:361.52px;top:146.25px;width:1.2px;height:37.40px"></div>
<div class="gl" style="left:562.96px;top:146.25px;width:1.2px;height:37.40px"></div>
<div class="gl" style="left:764.40px;top:146.25px;width:1.2px;height:37.40px"></div>
<div class="gl" style="left:9.60px;top:145.65px;width:805.76px;height:1.2px;background:#dfe6f3"></div>
<div class="fc y" style="left:9.60px;top:183.65px;width:151.08px;height:37.90px;padding-top:20.6px">0x1</div>
<div class="fc y" style="left:160.68px;top:183.65px;width:201.44px;height:37.90px;padding-top:20.6px">0x1</div>
<div class="fc y" style="left:362.12px;top:183.65px;width:201.44px;height:37.90px;padding-top:20.6px">0x1</div>
<div class="fc y" style="left:563.56px;top:183.65px;width:201.44px;height:37.90px;padding-top:20.6px">0x1</div>
<div class="fc y" style="left:765.00px;top:183.65px;width:50.36px;height:37.90px;padding-top:20.6px"></div>
<div class="gl" style="left:160.08px;top:183.65px;width:1.2px;height:37.40px"></div>
<div class="gl" style="left:361.52px;top:183.65px;width:1.2px;height:37.40px"></div>
<div class="gl" style="left:562.96px;top:183.65px;width:1.2px;height:37.40px"></div>
<div class="gl" style="left:764.40px;top:183.65px;width:1.2px;height:37.40px"></div>
<div class="gl" style="left:9.60px;top:183.05px;width:805.76px;height:1.2px"></div>
<div class="fc y" style="left:9.60px;top:221.05px;width:151.08px;height:37.90px;padding-top:20.6px">0x1</div>
<div class="fc y" style="left:160.68px;top:221.05px;width:201.44px;height:37.90px;padding-top:20.6px">0x2</div>
<div class="fc y" style="left:362.12px;top:221.05px;width:201.44px;height:37.90px;padding-top:20.6px">0x2</div>
<div class="fc y" style="left:563.56px;top:221.05px;width:201.44px;height:37.90px;padding-top:20.6px">0x2</div>
<div class="fc y" style="left:765.00px;top:221.05px;width:50.36px;height:37.90px;padding-top:20.6px"></div>
<div class="gl" style="left:160.08px;top:221.05px;width:1.2px;height:37.40px"></div>
<div class="gl" style="left:361.52px;top:221.05px;width:1.2px;height:37.40px"></div>
<div class="gl" style="left:562.96px;top:221.05px;width:1.2px;height:37.40px"></div>
<div class="gl" style="left:764.40px;top:221.05px;width:1.2px;height:37.40px"></div>
<div class="gl" style="left:9.60px;top:220.45px;width:805.76px;height:1.2px"></div>
<div class="fc y" style="left:9.60px;top:258.45px;width:151.08px;height:37.90px;padding-top:20.6px">0x2</div>
<div class="fc y" style="left:160.68px;top:258.45px;width:201.44px;height:37.90px;padding-top:20.6px">0x2</div>
<div class="fc y" style="left:362.12px;top:258.45px;width:201.44px;height:37.90px;padding-top:20.6px">0x2</div>
<div class="fc y" style="left:563.56px;top:258.45px;width:201.44px;height:37.90px;padding-top:20.6px">0x2</div>
<div class="fc y" style="left:765.00px;top:258.45px;width:50.36px;height:37.90px;padding-top:20.6px"></div>
<div class="gl" style="left:160.08px;top:258.45px;width:1.2px;height:37.40px"></div>
<div class="gl" style="left:361.52px;top:258.45px;width:1.2px;height:37.40px"></div>
<div class="gl" style="left:562.96px;top:258.45px;width:1.2px;height:37.40px"></div>
<div class="gl" style="left:764.40px;top:258.45px;width:1.2px;height:37.40px"></div>
<div class="gl" style="left:9.60px;top:257.85px;width:805.76px;height:1.2px"></div>
<div class="fc y" style="left:9.60px;top:295.85px;width:151.08px;height:37.90px;padding-top:20.6px">0x2</div>
<div class="fc y" style="left:563.56px;top:295.85px;width:201.44px;height:37.90px;padding-top:20.6px">0x0</div>
<div class="fc y" style="left:765.00px;top:295.85px;width:50.36px;height:37.90px;padding-top:20.6px"></div>
<div class="gl" style="left:562.96px;top:295.85px;width:1.2px;height:37.40px"></div>
<div class="gl" style="left:764.40px;top:295.85px;width:1.2px;height:37.40px"></div>
<div class="gl" style="left:9.60px;top:295.25px;width:805.76px;height:1.2px"></div>
<div class="fc g" style="left:160.68px;top:295.85px;width:402.88px;height:37.40px;padding-top:2.6px">CRC (0x7C53)
0x7C53</div>
<div class="fc y" style="left:9.60px;top:333.25px;width:151.08px;height:37.90px;padding-top:20.6px">0x0</div>
<div class="gl" style="left:9.60px;top:332.65px;width:151.08px;height:1.2px"></div>
</div>
<div class="fp" style="top:535px;height:410px"><div class="ti">Link B - #</div>
<div class="bit" style="left:11.80px"><span>31</span></div>
<div class="bit" style="left:36.90px"><span>30</span></div>
<div class="bit" style="left:62.00px"><span>29</span></div>
<div class="bit" style="left:87.10px"><span>28</span></div>
<div class="bit" style="left:112.20px"><span>27</span></div>
<div class="bit" style="left:137.30px"><span>26</span></div>
<div class="bit" style="left:162.40px"><span>25</span></div>
<div class="bit" style="left:187.50px"><span>24</span></div>
<div class="bit" style="left:212.60px"><span>23</span></div>
<div class="bit" style="left:237.70px"><span>22</span></div>
<div class="bit" style="left:262.80px"><span>21</span></div>
<div class="bit" style="left:287.90px"><span>20</span></div>
<div class="bit" style="left:313.00px"><span>19</span></div>
<div class="bit" style="left:338.10px"><span>18</span></div>
<div class="bit" style="left:363.20px"><span>17</span></div>
<div class="bit" style="left:388.30px"><span>16</span></div>
<div class="bit" style="left:413.40px"><span>15</span></div>
<div class="bit" style="left:438.50px"><span>14</span></div>
<div class="bit" style="left:463.60px"><span>13</span></div>
<div class="bit" style="left:488.70px"><span>12</span></div>
<div class="bit" style="left:513.80px"><span>11</span></div>
<div class="bit" style="left:538.90px"><span>10</span></div>
<div class="bit" style="left:564.00px"><span>9</span></div>
<div class="bit" style="left:589.10px"><span>8</span></div>
<div class="bit" style="left:614.20px"><span>7</span></div>
<div class="bit" style="left:639.30px"><span>6</span></div>
<div class="bit" style="left:664.40px"><span>5</span></div>
<div class="bit" style="left:689.50px"><span>4</span></div>
<div class="bit" style="left:714.60px"><span>3</span></div>
<div class="bit" style="left:739.70px"><span>2</span></div>
<div class="bit" style="left:764.80px"><span>1</span></div>
<div class="bit" style="left:789.90px"><span>0</span></div>
<div class="fc o" style="left:9.60px;top:71.3px;width:151.08px;height:36.7px;padding-top:3px">ackID
0x2</div>
<div class="fc o" style="left:160.68px;top:71.3px;width:25.18px;height:36.7px;padding-top:3px;font-size:12.5px">VC
0x0</div>
<div class="fc o" style="left:185.86px;top:71.3px;width:25.18px;height:36.7px;padding-top:3px;font-size:12.5px">CRF
0x0</div>
<div class="fc o" style="left:211.04px;top:71.3px;width:50.36px;height:36.7px;padding-top:3px">Prio
0x0</div>
<div class="fc o" style="left:261.40px;top:71.3px;width:50.36px;height:36.7px;padding-top:3px">tt
0x0</div>
<div class="fc o" style="left:311.76px;top:71.3px;width:100.72px;height:36.7px;padding-top:3px;font-size:12.5px">Logical_ftype
0x6</div>
<div class="fc o" style="left:412.48px;top:71.3px;width:201.44px;height:36.7px;padding-top:3px">destinationID
0x0</div>
<div class="fc o" style="left:613.92px;top:71.3px;width:201.44px;height:36.7px;padding-top:3px">sourceID
0xFF</div>
<div class="gl" style="left:160.18px;top:71.3px;width:1.2px;height:36.7px;background:#e9cda6"></div>
<div class="gl" style="left:185.36px;top:71.3px;width:1.2px;height:36.7px;background:#e9cda6"></div>
<div class="gl" style="left:210.54px;top:71.3px;width:1.2px;height:36.7px;background:#e9cda6"></div>
<div class="gl" style="left:260.90px;top:71.3px;width:1.2px;height:36.7px;background:#e9cda6"></div>
<div class="gl" style="left:311.26px;top:71.3px;width:1.2px;height:36.7px;background:#e9cda6"></div>
<div class="gl" style="left:411.98px;top:71.3px;width:1.2px;height:36.7px;background:#e9cda6"></div>
<div class="gl" style="left:613.42px;top:71.3px;width:1.2px;height:36.7px;background:#e9cda6"></div>
<div class="fc l" style="left:9.60px;top:108.0px;width:730.22px;height:38.25px;padding-top:4px">address [28:0]
0x140000C0</div>
<div class="fc l" style="left:739.82px;top:108.0px;width:25.18px;height:38.25px;font-size:9.4px;line-height:12.4px;padding-top:8.8px;border-left:1px solid #d2cfe0">rsrv
0x0</div>
<div class="fc y" style="left:765.00px;top:108.0px;width:50.36px;height:38.25px;border-left:1px solid #c7cfd3"></div>
<div class="fc y" style="left:9.60px;top:146.25px;width:151.08px;height:37.90px;padding-top:20.6px">0x1</div>
<div class="fc y" style="left:160.68px;top:146.25px;width:201.44px;height:37.90px;padding-top:20.6px">0x3</div>
<div class="fc y" style="left:362.12px;top:146.25px;width:201.44px;height:37.90px;padding-top:20.6px">0x3</div>
<div class="fc y" style="left:563.56px;top:146.25px;width:201.44px;height:37.90px;padding-top:20.6px">0x3</div>
<div class="fc y" style="left:765.00px;top:146.25px;width:50.36px;height:37.90px;padding-top:20.6px"></div>
<div class="gl" style="left:160.08px;top:146.25px;width:1.2px;height:37.40px"></div>
<div class="gl" style="left:361.52px;top:146.25px;width:1.2px;height:37.40px"></div>
<div class="gl" style="left:562.96px;top:146.25px;width:1.2px;height:37.40px"></div>
<div class="gl" style="left:764.40px;top:146.25px;width:1.2px;height:37.40px"></div>
<div class="gl" style="left:9.60px;top:145.65px;width:805.76px;height:1.2px;background:#dfe6f3"></div>
<div class="fc y" style="left:9.60px;top:183.65px;width:151.08px;height:37.90px;padding-top:20.6px">0x3</div>
<div class="fc y" style="left:160.68px;top:183.65px;width:201.44px;height:37.90px;padding-top:20.6px">0x3</div>
<div class="fc y" style="left:362.12px;top:183.65px;width:201.44px;height:37.90px;padding-top:20.6px">0x3</div>
<div class="fc y" style="left:563.56px;top:183.65px;width:201.44px;height:37.90px;padding-top:20.6px">0x3</div>
<div class="fc y" style="left:765.00px;top:183.65px;width:50.36px;height:37.90px;padding-top:20.6px"></div>
<div class="gl" style="left:160.08px;top:183.65px;width:1.2px;height:37.40px"></div>
<div class="gl" style="left:361.52px;top:183.65px;width:1.2px;height:37.40px"></div>
<div class="gl" style="left:562.96px;top:183.65px;width:1.2px;height:37.40px"></div>
<div class="gl" style="left:764.40px;top:183.65px;width:1.2px;height:37.40px"></div>
<div class="gl" style="left:9.60px;top:183.05px;width:805.76px;height:1.2px"></div>
<div class="fc y" style="left:9.60px;top:221.05px;width:151.08px;height:37.90px;padding-top:20.6px">0x3</div>
<div class="fc y" style="left:160.68px;top:221.05px;width:201.44px;height:37.90px;padding-top:20.6px">0x4</div>
<div class="fc y" style="left:362.12px;top:221.05px;width:201.44px;height:37.90px;padding-top:20.6px">0x4</div>
<div class="fc y" style="left:563.56px;top:221.05px;width:201.44px;height:37.90px;padding-top:20.6px">0x4</div>
<div class="fc y" style="left:765.00px;top:221.05px;width:50.36px;height:37.90px;padding-top:20.6px"></div>
<div class="gl" style="left:160.08px;top:221.05px;width:1.2px;height:37.40px"></div>
<div class="gl" style="left:361.52px;top:221.05px;width:1.2px;height:37.40px"></div>
<div class="gl" style="left:562.96px;top:221.05px;width:1.2px;height:37.40px"></div>
<div class="gl" style="left:764.40px;top:221.05px;width:1.2px;height:37.40px"></div>
<div class="gl" style="left:9.60px;top:220.45px;width:805.76px;height:1.2px"></div>
<div class="fc y" style="left:9.60px;top:258.45px;width:151.08px;height:37.90px;padding-top:20.6px">0x4</div>
<div class="fc y" style="left:160.68px;top:258.45px;width:201.44px;height:37.90px;padding-top:20.6px">0x4</div>
<div class="fc y" style="left:362.12px;top:258.45px;width:201.44px;height:37.90px;padding-top:20.6px">0x4</div>
<div class="fc y" style="left:563.56px;top:258.45px;width:201.44px;height:37.90px;padding-top:20.6px">0x4</div>
<div class="fc y" style="left:765.00px;top:258.45px;width:50.36px;height:37.90px;padding-top:20.6px"></div>
<div class="gl" style="left:160.08px;top:258.45px;width:1.2px;height:37.40px"></div>
<div class="gl" style="left:361.52px;top:258.45px;width:1.2px;height:37.40px"></div>
<div class="gl" style="left:562.96px;top:258.45px;width:1.2px;height:37.40px"></div>
<div class="gl" style="left:764.40px;top:258.45px;width:1.2px;height:37.40px"></div>
<div class="gl" style="left:9.60px;top:257.85px;width:805.76px;height:1.2px"></div>
<div class="fc y" style="left:9.60px;top:295.85px;width:151.08px;height:37.90px;padding-top:20.6px">0x4</div>
<div class="fc y" style="left:160.68px;top:295.85px;width:201.44px;height:37.90px;padding-top:20.6px">0x5</div>
<div class="fc y" style="left:362.12px;top:295.85px;width:201.44px;height:37.90px;padding-top:20.6px">0x5</div>
<div class="fc y" style="left:563.56px;top:295.85px;width:201.44px;height:37.90px;padding-top:20.6px">0x5</div>
<div class="fc y" style="left:765.00px;top:295.85px;width:50.36px;height:37.90px;padding-top:20.6px"></div>
<div class="gl" style="left:160.08px;top:295.85px;width:1.2px;height:37.40px"></div>
<div class="gl" style="left:361.52px;top:295.85px;width:1.2px;height:37.40px"></div>
<div class="gl" style="left:562.96px;top:295.85px;width:1.2px;height:37.40px"></div>
<div class="gl" style="left:764.40px;top:295.85px;width:1.2px;height:37.40px"></div>
<div class="gl" style="left:9.60px;top:295.25px;width:805.76px;height:1.2px"></div>
<div class="fc y" style="left:9.60px;top:333.25px;width:151.08px;height:37.90px;padding-top:20.6px">0x5</div>
<div class="fc y" style="left:160.68px;top:333.25px;width:201.44px;height:37.90px;padding-top:20.6px">0x5</div>
<div class="fc y" style="left:362.12px;top:333.25px;width:201.44px;height:37.90px;padding-top:20.6px">0x5</div>
<div class="fc y" style="left:563.56px;top:333.25px;width:201.44px;height:37.90px;padding-top:20.6px">0x5</div>
<div class="fc y" style="left:765.00px;top:333.25px;width:50.36px;height:37.90px;padding-top:20.6px"></div>
<div class="gl" style="left:160.08px;top:333.25px;width:1.2px;height:37.40px"></div>
<div class="gl" style="left:361.52px;top:333.25px;width:1.2px;height:37.40px"></div>
<div class="gl" style="left:562.96px;top:333.25px;width:1.2px;height:37.40px"></div>
<div class="gl" style="left:764.40px;top:333.25px;width:1.2px;height:37.40px"></div>
<div class="gl" style="left:9.60px;top:332.65px;width:805.76px;height:1.2px"></div>
<div class="fc y" style="left:9.60px;top:370.65px;width:151.08px;height:37.90px;padding-top:20.6px">0x5</div>
<div class="fc y" style="left:160.68px;top:370.65px;width:201.44px;height:37.90px;padding-top:20.6px">0x6</div>
<div class="fc y" style="left:362.12px;top:370.65px;width:201.44px;height:37.90px;padding-top:20.6px">0x6</div>
<div class="fc y" style="left:563.56px;top:370.65px;width:201.44px;height:37.90px;padding-top:20.6px">0x6</div>
<div class="fc y" style="left:765.00px;top:370.65px;width:50.36px;height:37.90px;padding-top:20.6px"></div>
<div class="gl" style="left:160.08px;top:370.65px;width:1.2px;height:37.40px"></div>
<div class="gl" style="left:361.52px;top:370.65px;width:1.2px;height:37.40px"></div>
<div class="gl" style="left:562.96px;top:370.65px;width:1.2px;height:37.40px"></div>
<div class="gl" style="left:764.40px;top:370.65px;width:1.2px;height:37.40px"></div>
<div class="gl" style="left:9.60px;top:370.05px;width:805.76px;height:1.2px"></div>
<div style="position:absolute;left:819.6px;top:49px;width:2.8px;height:141px;background:#808080"></div>
<div style="position:absolute;left:811.6px;top:92px;width:2.8px;height:286px;background:#758585"></div>
</div>
<style>
.tab{position:absolute;top:953px;height:33px;border:1px solid #c9c9c9;background:#f0f0f0;font-size:15.9px;color:#111;white-space:nowrap;text-align:center;padding-top:7.5px;letter-spacing:-0.1px;text-indent:-1px}
.tab.sel{background:#fff;border-color:#dcdcdc;border-bottom-color:#fff}
.tab.sel span{border-bottom:2.4px solid #0a64b4;padding-bottom:0px}
#status{position:absolute;left:0;top:988px;width:1918px;height:30px;background:#425d7c}
#status .v{position:absolute;left:13px;top:6.8px;color:#fff;font-weight:bold;font-size:17.5px;letter-spacing:-0.26px}
#status .d{position:absolute;left:1203px;top:6.8px;color:#fff;font-weight:bold;font-size:17.5px;letter-spacing:-0.44px}
#pb{position:absolute;left:1657px;top:6px;width:251px;height:19px;background:#0078d4;border-radius:3px;color:#14324f;text-align:center;font-size:16.5px;line-height:21.5px;letter-spacing:-0.3px;text-indent:-2px;overflow:hidden}
</style>
<div class="tab sel" style="left:2px;width:101px"><span>Result view</span></div>
<div class="tab" style="left:103px;width:65px"><span>Setup</span></div>
<div class="tab" style="left:168px;width:111px"><span>Trigger View</span></div>
<div class="tab" style="left:279px;width:110px"><span>Report View</span></div>
<div class="tab sel" style="left:1084px;width:104px"><span>Frame view</span></div>
<div class="tab" style="left:1188px;width:125px"><span>Analytics View</span></div>
<div class="tab" style="left:1313px;width:127px"><span>HW Stats View</span></div>
<div class="tab" style="left:1440px;width:97px"><span>Filter View</span></div>
<div id="status"><div class="v">0.0.8.0</div><div class="d">Decoding Data...</div><div id="pb">100%</div></div>
</body></html>
